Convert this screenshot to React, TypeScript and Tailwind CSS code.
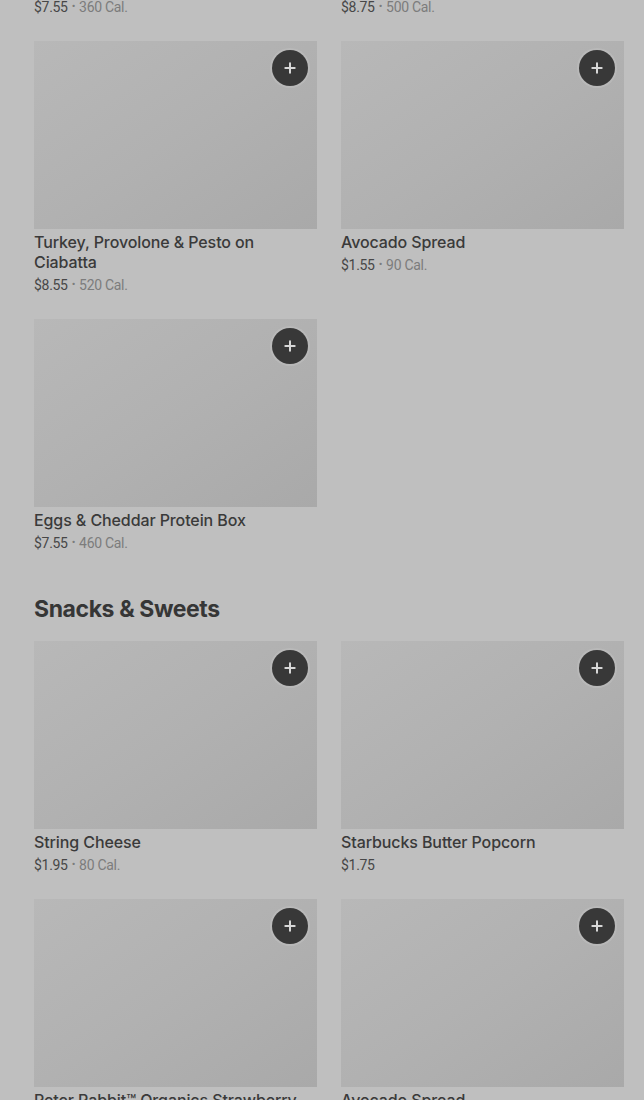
import { Plus } from 'lucide-react';

interface Item {
  name: string;
  price: string;
  cal?: string;
}

interface Section {
  title?: string;
  items: Item[];
}

// page is scrolled: the first section's heading and earlier rows sit above the viewport
const SECTIONS: Section[] = [
  {
    items: [
      { name: 'Bacon & Gouda Sandwich', price: '$7.55', cal: '360 Cal.' },
      { name: 'Chicken & Bacon Brioche', price: '$8.75', cal: '500 Cal.' },
      { name: 'Turkey, Provolone & Pesto on Ciabatta', price: '$8.55', cal: '520 Cal.' },
      { name: 'Avocado Spread', price: '$1.55', cal: '90 Cal.' },
      { name: 'Eggs & Cheddar Protein Box', price: '$7.55', cal: '460 Cal.' },
    ],
  },
  {
    title: 'Snacks & Sweets',
    items: [
      { name: 'String Cheese', price: '$1.95', cal: '80 Cal.' },
      { name: 'Starbucks Butter Popcorn', price: '$1.75' },
      { name: 'Peter Rabbit™ Organics Strawberry Banana', price: '$1.95', cal: '70 Cal.' },
      { name: 'Avocado Spread', price: '$1.55', cal: '90 Cal.' },
    ],
  },
];

function ItemCard({ item }: { item: Item }) {
  return (
    <div className="flex flex-col">
      <div className="relative h-[188px] bg-gradient-to-br from-[#b8b8b8] via-[#b1b1b1] to-[#a9a9a9]">
        <button className="absolute right-[9px] top-[9px] flex h-9 w-9 items-center justify-center rounded-full bg-[#383838] text-[#d8d8d8] shadow-[0_0_0_2px_rgba(200,200,200,0.35)]">
          <Plus size={16} strokeWidth={3} />
        </button>
      </div>
      <p className="mt-[3px] text-[16px] font-medium leading-5 tracking-[-0.1px] text-[#3a3a3a]">
        {item.name}
      </p>
      <div
        className="mt-[3px] flex h-5 items-center text-[14px] leading-5 tracking-[-0.3px] text-[#474747]"
        style={{ fontFamily: 'Roboto, "Noto Sans", sans-serif' }}
      >
        <span>{item.price}</span>
        {item.cal && (
          <>
            <span className="mx-[4px] text-[11px] leading-5 text-[#7c7c7c]">•</span>
            <span className="text-[#7c7c7c]">{item.cal}</span>
          </>
        )}
      </div>
    </div>
  );
}

export default function App() {
  return (
    <div
      className="min-h-[1100px] overflow-hidden bg-[#bfbfbf] pl-[34px] pr-[20px]"
      style={{ fontFamily: 'Inter, "Noto Sans", sans-serif' }}
    >
      <div className="-mt-[217px]">
        {SECTIONS.map((s, i) => (
          <section key={i} className={s.title ? 'mt-[40px]' : ''}>
            {s.title && (
              <h2 className="mb-[16px] text-[23px] font-bold leading-8 tracking-[-0.4px] text-[#363636]">
                {s.title}
              </h2>
            )}
            <div className="grid grid-cols-2 gap-x-[24px] gap-y-[24px]">
              {s.items.map((it, j) => (
                <ItemCard key={j} item={it} />
              ))}
            </div>
          </section>
        ))}
      </div>
    </div>
  );
}
